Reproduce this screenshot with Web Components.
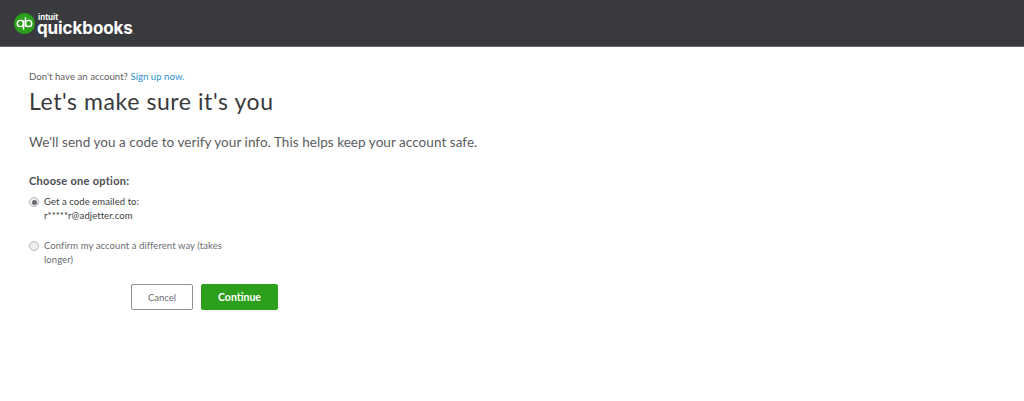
<!DOCTYPE html>
<html>
<head>
<meta charset="utf-8">
<style>
	html, body { margin: 0; padding: 0; background: #fff; }
	body { font-family: "Lato", "Liberation Sans", sans-serif; color: #393a3d; }
	verify-page a { color: #2b8fd0; }
</style>
</head>
<body>
	<qb-header></qb-header>
	<verify-page>
		<span slot="signup">Don't have an account? <a>Sign up now.</a></span>
		<span slot="title">Let's make sure it's you</span>
		<span slot="intro">We'll send you a code to verify your info. This helps keep your account safe.</span>
		<option-group label="Choose one option:">
			<radio-option checked>Get a code emailed to:<br>r*****r@adjetter.com</radio-option>
			<radio-option>Confirm my account a different way (takes longer)</radio-option>
		</option-group>
		<form-actions></form-actions>
	</verify-page>

	<template id="qbHeader">
		<style>
			:host { display: flex; align-items: flex-start; height: 47px; box-sizing: border-box; padding: 12px 0 0 14px; background: #393a3d; border-bottom: 1px solid #6b6c6f; }
			svg { display: block; width: 21px; height: 21px; margin: 1px 1px 0 0; }
			.word { display: flex; flex-direction: column; margin-left: 1px; color: #fff; }
			.intuit { font: 700 8px/7px "Inter", sans-serif; margin: 2px 0 0 1px; height: 6px; }
			.qb { font: 700 17px/16px "Inter", sans-serif; letter-spacing: -.1px; margin-top: 0; }
			.qb small { font-size: 5px; font-weight: 400; color: #c9cacc; }
		</style>
		<svg viewBox="0 0 22 22" aria-hidden="true">
			<circle cx="11" cy="11" r="11" fill="#2ca01c"/>
			<circle cx="6.7" cy="11" r="3.3" fill="none" stroke="#fff" stroke-width="1.5"/>
			<circle cx="15.3" cy="11" r="3.3" fill="none" stroke="#fff" stroke-width="1.5"/>
			<path d="M10 7.7V17.6M12 14.3V4.4" fill="none" stroke="#fff" stroke-width="1.5"/>
		</svg>
		<div class="word">
			<span class="intuit">intuit</span>
			<span class="qb">quickbooks<small>.</small></span>
		</div>
	</template>

	<template id="verifyPage">
		<style>
			:host { display: block; padding: 24px 0 0 29px; }
			.signup { font-size: 9.6px; line-height: 12px; letter-spacing: .03px; color: #5f6064; }
			::slotted(span) { display: block; }
			h1 { margin: 4px 0 0; font-size: 23px; font-weight: 400; line-height: 28px; letter-spacing: .58px; color: #393a3d; }
			p { margin: 17px 0 0; font-size: 13.5px; line-height: 20px; letter-spacing: .05px; color: #5b5c61; }
			.rest { margin-top: 22px; }
		</style>
		<div class="signup"><slot name="signup"></slot></div>
		<h1><slot name="title"></slot></h1>
		<p><slot name="intro"></slot></p>
		<div class="rest"><slot></slot></div>
	</template>

	<template id="optionGroup">
		<style>
			:host { display: block; width: 200px; }
			.label { font-size: 11px; font-weight: 700; line-height: 14px; letter-spacing: .28px; color: #4b4c50; margin-bottom: 7px; }
			.list { display: flex; flex-direction: column; gap: 16px; }
		</style>
		<div class="label"></div>
		<div class="list"><slot></slot></div>
	</template>

	<template id="radioOption">
		<style>
			:host { display: flex; gap: 5px; font-size: 9.5px; line-height: 14px; color: #6b6c72; }
			:host([checked]) { color: #393a3d; }
			.dot { flex: none; box-sizing: border-box; width: 10px; height: 10px; margin-top: 2px; border-radius: 50%; border: 1px solid #b5b6ba; background: #eeeeef; display: flex; align-items: center; justify-content: center; }
			:host([checked]) .dot::after { content: ""; width: 5px; height: 5px; border-radius: 50%; background: #6b6c72; }
			.text { width: 180px; letter-spacing: .07px; }
		</style>
		<span class="dot"></span>
		<span class="text"><slot></slot></span>
	</template>

	<template id="formActions">
		<style>
			:host { display: flex; gap: 8px; margin: 17px 0 0 102px; }
			button { box-sizing: border-box; height: 26px; padding: 0; font-family: inherit; border-radius: 2px; }
			.cancel { width: 62px; background: #fff; border: 1px solid #8d9096; color: #6b6c72; font-size: 9.5px; }
			.go { width: 77px; background: #2ca01c; border: 1px solid #2ca01c; color: #fff; font-size: 10.5px; font-weight: 700; }
		</style>
		<button class="cancel">Cancel</button>
		<button class="go">Continue</button>
	</template>

	<script>
		(function(customElements) {

			'use strict';

			// every element just stamps its template into an open shadow root
			class Stamped extends HTMLElement {
				constructor() {
					super();
					const t = document.querySelector('#' + this.constructor.tpl);
					this.attachShadow({mode: 'open'}).appendChild(t.content.cloneNode(true));
				}
			}

			class QbHeader extends Stamped { static get tpl() { return 'qbHeader'; } }
			class VerifyPage extends Stamped { static get tpl() { return 'verifyPage'; } }
			class RadioOption extends Stamped { static get tpl() { return 'radioOption'; } }
			class FormActions extends Stamped { static get tpl() { return 'formActions'; } }
			class OptionGroup extends Stamped {
				static get tpl() { return 'optionGroup'; }
				connectedCallback() {
					this.shadowRoot.querySelector('.label').textContent = this.getAttribute('label');
				}
			}

			customElements.define('qb-header', QbHeader);
			customElements.define('verify-page', VerifyPage);
			customElements.define('radio-option', RadioOption);
			customElements.define('form-actions', FormActions);
			customElements.define('option-group', OptionGroup);

		})(window.customElements);
	</script>
</body>
</html>
